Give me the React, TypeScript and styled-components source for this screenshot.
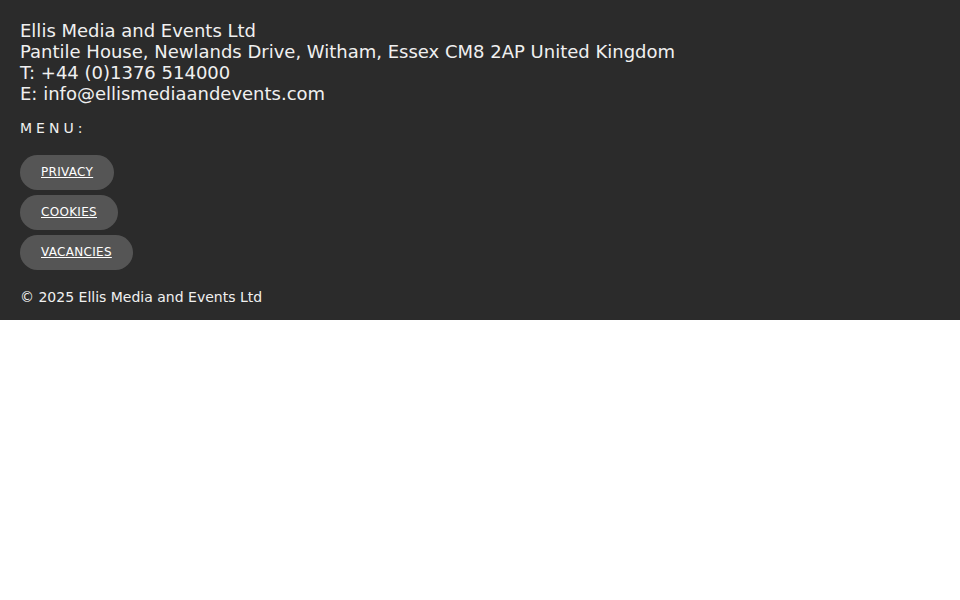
import React from "react";
import styled, { createGlobalStyle } from "styled-components";

const Global = createGlobalStyle`
  html, body { margin: 0; padding: 0; background: #ffffff; }
  body { font-family: "DejaVu Sans", "Liberation Sans", sans-serif; }
`;

const Footer = styled.footer`
  background: #2b2b2b;
  color: #f0f0f0;
  padding: 20px 20px 15px;
  height: 320px;
  box-sizing: border-box;
  box-shadow: 0 3px 6px rgba(0, 0, 0, 0.4);
  display: flex;
  flex-direction: column;
`;

const Address = styled.address`
  font-style: normal;
  font-size: 18px;
  line-height: 21px;
  display: flex;
  flex-direction: column;
`;

const MenuLabel = styled.div`
  margin-top: 16px;
  font-size: 14px;
  line-height: 16px;
  letter-spacing: 4px;
  text-transform: uppercase;
`;

const Menu = styled.nav`
  margin-top: 19px;
  display: flex;
  flex-direction: column;
  align-items: flex-start;
  gap: 5px;
`;

const Pill = styled.a`
  display: inline-block;
  background: #555555;
  color: #ffffff;
  font-size: 12px;
  line-height: 15px;
  letter-spacing: 0.3px;
  padding: 10px 21px;
  border-radius: 18px;
  text-decoration: underline;
  text-transform: uppercase;
`;

const Copy = styled.div`
  margin-top: 19px;
  font-size: 14px;
  line-height: 16px;
`;

export default function App() {
  return (
    <>
      <Global />
      <Footer>
        <Address>
          <span>Ellis Media and Events Ltd</span>
          <span>Pantile House, Newlands Drive, Witham, Essex CM8 2AP United Kingdom</span>
          <span>T: +44 (0)1376 514000</span>
          <span>E: info@ellismediaandevents.com</span>
        </Address>
        <MenuLabel>Menu:</MenuLabel>
        <Menu>
          <Pill href="#">Privacy</Pill>
          <Pill href="#">Cookies</Pill>
          <Pill href="#">Vacancies</Pill>
        </Menu>
        <Copy>© 2025 Ellis Media and Events Ltd</Copy>
      </Footer>
    </>
  );
}
